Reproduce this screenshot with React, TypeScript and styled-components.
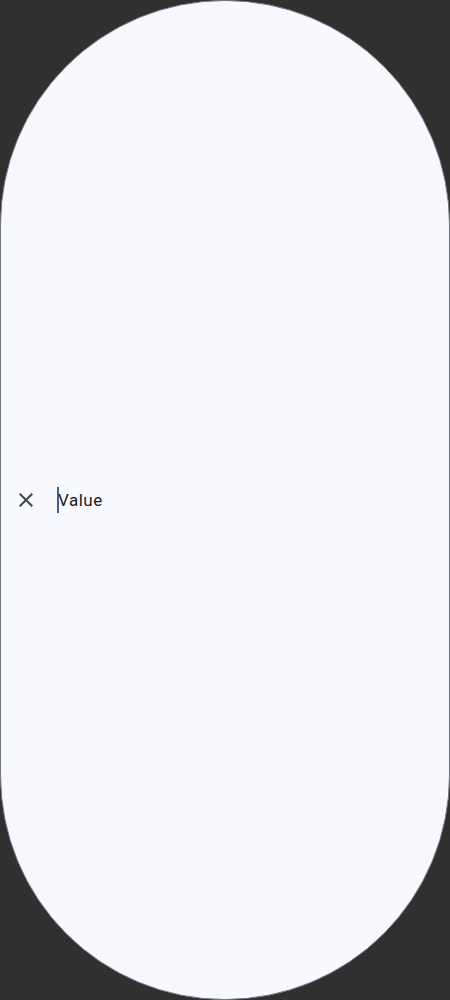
import React from "react";
import styled, { createGlobalStyle } from "styled-components";

const Global = createGlobalStyle`
  html, body {
    margin: 0;
    padding: 0;
    background: #303030;
    font-family: Roboto, "Noto Sans", sans-serif;
  }
  #root {
    width: 450px;
    height: 1000px;
  }
`;

const Bar = styled.div`
  box-sizing: border-box;
  width: 450px;
  height: 1000px;
  border: 1px solid #74777f;
  border-radius: 9999px;
  background: #f8f9ff;
  display: flex;
  align-items: center;
  padding-left: 13px;
  gap: 19px;
`;

const IconButton = styled.button`
  width: 24px;
  height: 24px;
  padding: 0;
  border: none;
  background: transparent;
  display: flex;
  align-items: center;
  justify-content: center;
  color: #44474e;
  cursor: pointer;
`;

const Field = styled.div`
  display: flex;
  align-items: center;
  height: 26px;
`;

const Caret = styled.span`
  display: inline-block;
  width: 2px;
  height: 26px;
  background: #415f91;
  margin-right: -1px;
`;

const Text = styled.span`
  font-family: Roboto, sans-serif;
  font-size: 17px;
  line-height: 24px;
  letter-spacing: 0.5px;
  color: #1a1c20;
`;

export default function App() {
  return (
    <>
      <Global />
      <Bar>
        <IconButton aria-label="Clear">
          <svg width="24" height="24" viewBox="0 0 24 24" fill="currentColor">
            <path d="M19 6.41 17.59 5 12 10.59 6.41 5 5 6.41 10.59 12 5 17.59 6.41 19 12 13.41 17.59 19 19 17.59 13.41 12z" />
          </svg>
        </IconButton>
        <Field>
          <Caret />
          <Text>Value</Text>
        </Field>
      </Bar>
    </>
  );
}
